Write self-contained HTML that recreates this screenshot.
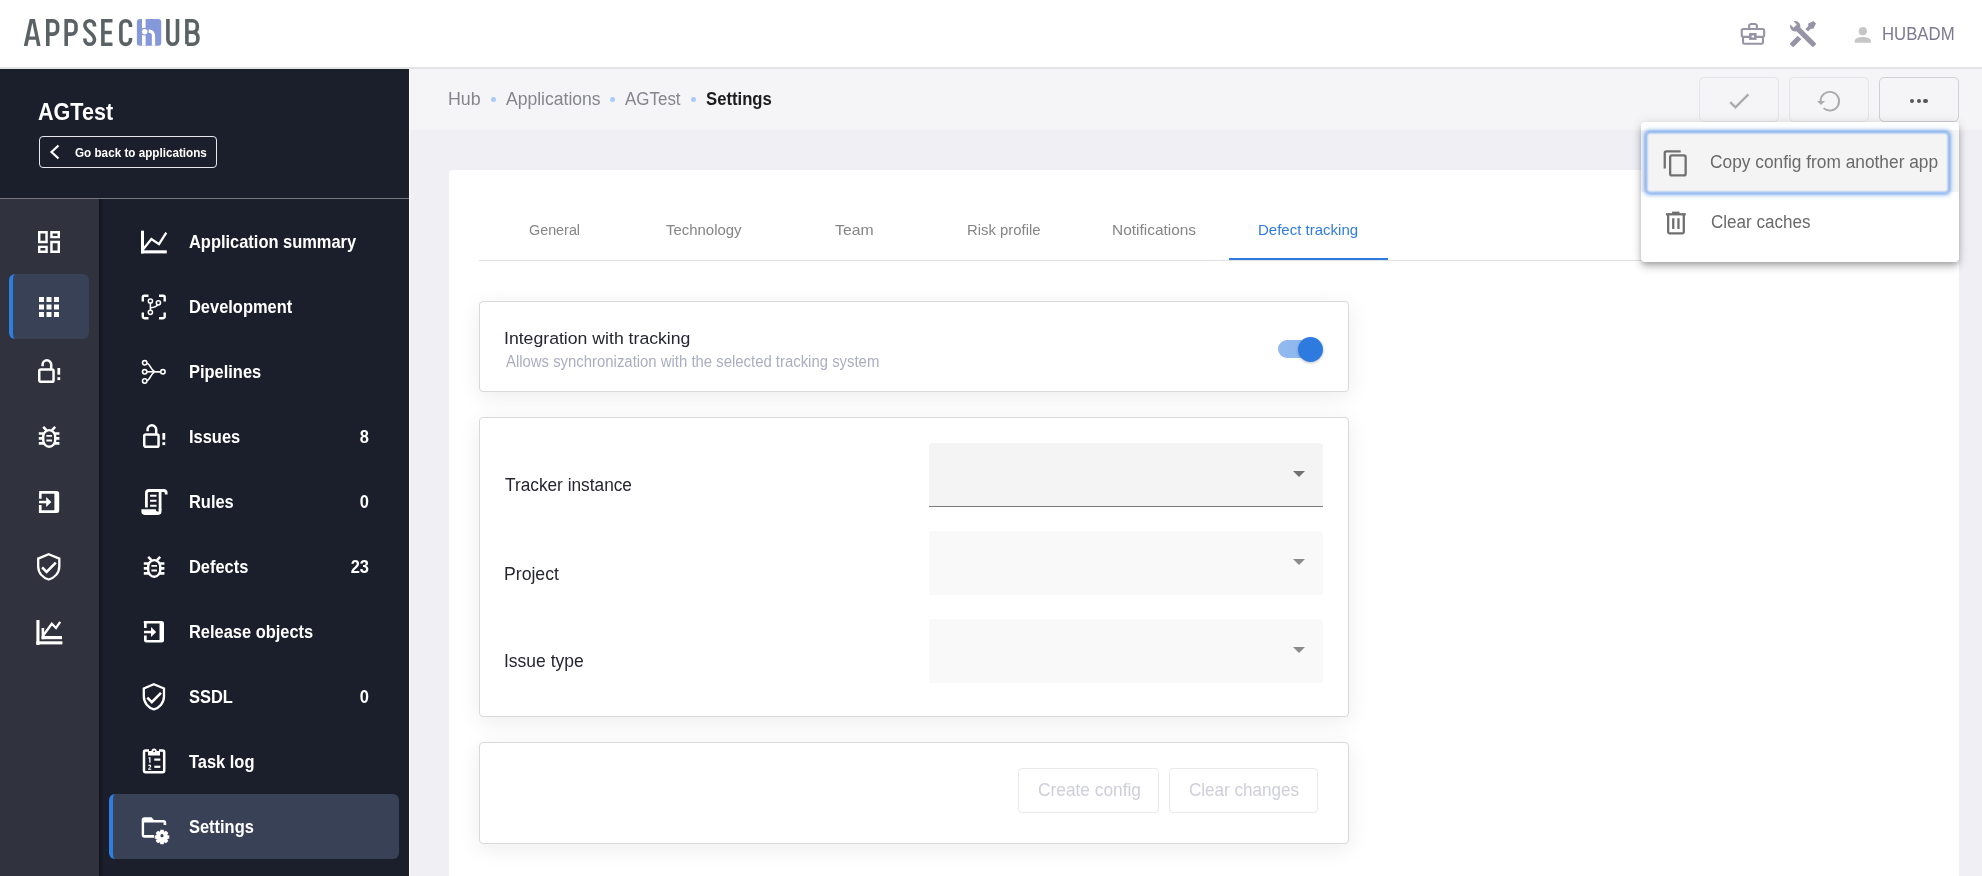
<!DOCTYPE html>
<html>
<head>
<meta charset="utf-8">
<style>
*{box-sizing:border-box;margin:0;padding:0}
html,body{width:1982px;height:876px;overflow:hidden;background:#efeff4;font-family:"Liberation Sans",sans-serif}
.a{position:absolute}
.t{position:absolute;white-space:nowrap;line-height:1;transform-origin:0 0}
svg{position:absolute;overflow:visible}
#header{left:0;top:0;width:1982px;height:67px;background:#fff}
#hborder{left:0;top:67px;width:1982px;height:2px;background:#e4e4e7}
#side{left:0;top:69px;width:409px;height:807px;background:#1b1f2b}
#sline{left:409px;top:69px;width:1px;height:807px;background:#fff}
#rail{left:0;top:199px;width:99px;height:677px;background:#30333e}
#divider{left:0;top:198px;width:409px;height:1px;background:#77787d}
#crumbbar{left:410px;top:69px;width:1572px;height:61px;background:#f5f5f8}
.nav{left:188.9px;color:#fff;font-weight:700;font-size:19.13px;transform:scaleX(0.86)}
.cnt{color:#fff;font-weight:700;font-size:19.13px;text-align:right;width:60px;left:309px;transform-origin:100% 0;transform:scaleX(0.86)}
.tab{font-size:15px;color:#858585;text-align:center}
.card{position:absolute;background:#fff;border:1px solid #d9d9dc;border-radius:4px;box-shadow:0 5px 22px rgba(0,0,0,0.075)}
.lbl{font-size:17px;color:#262633}
.sel{position:absolute;left:929px;width:394px;height:64px;background:#f9f9f9;border-radius:4px 4px 0 0}
.arr{position:absolute;width:0;height:0;border-left:6px solid transparent;border-right:6px solid transparent;border-top:6px solid #8a8a8a}
.btn{position:absolute;border:1px solid #e9e9ef;border-radius:4px;background:#fff}
.tb{position:absolute;top:77px;width:80px;height:45px;border:1px solid #e4e4e8;border-radius:5px;background:#f5f5f8}
</style>
</head>
<body>
<div id="header" class="a"></div>
<div id="hborder" class="a"></div>
<div id="side" class="a"></div>
<div id="sline" class="a"></div>
<div id="divider" class="a"></div>
<div id="rail" class="a"></div>
<div class="a" style="left:99px;top:199px;width:5px;height:677px;background:linear-gradient(to right,rgba(0,0,0,0.32),rgba(0,0,0,0))"></div>
<div id="crumbbar" class="a"></div>

<!-- HEADER CONTENT -->
<div class="t" style="left:1881.75px;top:25.02px;font-size:18.62px;color:#7c7990;transform:scaleX(0.900);">HUBADM</div>
<svg style="left:0;top:0" width="210" height="60" viewBox="0 0 210 60">
<g fill="none" stroke="#5b6266" stroke-width="3.6" stroke-linejoin="miter">
<path d="M47.8 46 V20.9 H53 a4.6 4.6 0 0 1 4.6 4.6 V29.5 a4.6 4.6 0 0 1 -4.6 4.6 H47.8"/>
<path d="M66.2 46 V20.9 H71.4 a4.6 4.6 0 0 1 4.6 4.6 V29.5 a4.6 4.6 0 0 1 -4.6 4.6 H66.2"/>
<path d="M94.5 26.5 V25.5 a4.8 4.8 0 0 0 -9.6 0 C84.9 31 94.5 33.5 94.5 39.5 a4.8 4.8 0 0 1 -9.6 0 V38.5"/>
<path d="M112.5 20.8 H102.9 V44.3 H112.5 M102.9 32.5 H111.8"/>
<path d="M130.5 27 V25.5 a4.8 4.8 0 0 0 -9.6 0 V39.6 a4.8 4.8 0 0 0 9.6 0 V38"/>
<path d="M167.9 19.1 V39.5 a4.8 4.8 0 0 0 9.6 0 V19.1"/>
<path d="M186.9 44.3 V20.8 H192.5 a4.8 4.8 0 0 1 4.8 4.8 V27.5 a4.8 4.8 0 0 1 -4.8 4.8 H186.9 M192.7 32.3 a5.2 5.2 0 0 1 5.2 5.2 V39.1 a5.2 5.2 0 0 1 -5.2 5.2 H186.9"/>
</g>
<path fill="#5b6266" fill-rule="evenodd" d="M23.8 46 L29.7 19.1 H34.9 L40.6 46 H37 L35.8 39.8 H28.9 L27.5 46 Z M29.5 36.6 H35.2 L32.35 22.8 Z"/>
<rect x="136.9" y="18.9" width="24.3" height="26.8" rx="3" fill="#8598d9"/>
<g fill="#fff"><rect x="142" y="18.9" width="3.6" height="26.8"/></g>
<circle cx="144.7" cy="31.7" r="3.85" fill="#8598d9"/>
<circle cx="144.7" cy="31.7" r="2.75" fill="#fff"/>
<path d="M148.7 31.1 H149.2 a4.3 4.3 0 0 1 4.3 4.3 V45.7" fill="none" stroke="#fff" stroke-width="3.3"/>
</svg>
<!-- briefcase -->
<svg style="left:1736px;top:18px" width="34" height="32" viewBox="1736 18 34 32"><g fill="none" stroke="#9694a6" stroke-width="2.1"><path d="M1749.15 28.2 V25.2 L1750.6 23.95 H1755.4 L1756.85 25.2 V28.2"/><rect x="1741.75" y="29.05" width="22.4" height="7.8" rx="1.6"/><path d="M1743.05 37.2 V42.4 a1.35 1.35 0 0 0 1.35 1.35 H1761.6 a1.35 1.35 0 0 0 1.35 -1.35 V37.2"/></g><rect x="1750.35" y="34.25" width="5" height="4.4" fill="#fff" stroke="#9694a6" stroke-width="2.5"/></svg>
<!-- tools -->
<svg style="left:1790px;top:20.8px" width="26" height="26" viewBox="2 2 20 20"><path fill="#9694a6" d="M21.71 20.29L20.29 21.71A1 1 0 0 1 18.88 21.71L7 9.85A3.81 3.81 0 0 1 6 10A4 4 0 0 1 2.22 4.7L4.76 7.24L5.29 6.71L6.71 5.29L7.24 4.76L4.7 2.22A4 4 0 0 1 10 6A3.81 3.81 0 0 1 9.85 7L21.71 18.88A1 1 0 0 1 21.71 20.29M2.29 18.88A1 1 0 0 0 2.29 20.29L3.71 21.71A1 1 0 0 0 5.12 21.71L10.71 16.12L7.88 13.29M20 2L16 4V6L13.83 8.17L15.83 10.17L18 8H20L22 4Z"/></svg>
<!-- user -->
<svg style="left:1854px;top:26px" width="18" height="18" viewBox="0 0 18 18"><g fill="#c6c6c6"><circle cx="8.8" cy="5.2" r="4.1"/><path d="M0.7 16.8 V15 C0.7 12.2 5.5 10.9 8.8 10.9 C12.1 10.9 16.9 12.2 16.9 15 V16.8 Z"/></g></svg>

<!-- SIDEBAR CONTENT -->
<div class="t" style="left:38.15px;top:99.77px;font-size:23.80px;font-weight:700;color:#fff;transform:scaleX(0.906);">AGTest</div>
<div class="t" style="left:74.87px;top:146.44px;font-size:13.48px;font-weight:700;color:#fff;transform:scaleX(0.868);">Go back to applications</div>
<div class="a" style="left:39px;top:136px;width:178px;height:32px;border:1px solid #e8e8ec;border-radius:4px"></div>
<svg style="left:0;top:0" width="1" height="1"><path d="M58.5 145.5 L51.5 152 L58.5 158.5" fill="none" stroke="#fff" stroke-width="2.2"/></svg>

<!-- rail active -->
<div class="a" style="left:9px;top:274px;width:80px;height:65px;background:#394157;border-radius:6px;border-left:4px solid #2f7de1"></div>

<!-- rail icons -->
<svg style="left:38px;top:231px" width="22" height="22" viewBox="3 3 18 18"><path fill="#fff" d="M19 5v2h-4V5h4M9 5v6H5V5h4m10 8v6h-4v-6h4M9 17v2H5v-2h4M21 3h-8v6h8V3zM11 3H3v10h8V3zm10 8h-8v10h8V11zm-10 4H3v6h8v-6z"/></svg>
<svg style="left:39px;top:297px" width="20" height="20" viewBox="4 4 16 16"><path fill="#fff" d="M4 8h4V4H4v4zm6 12h4v-4h-4v4zm-6 0h4v-4H4v4zm0-6h4v-4H4v4zm6 0h4v-4h-4v4zm6-10v4h4V4h-4zm-6 4h4V4h-4v4zm6 6h4v-4h-4v4zm0 6h4v-4h-4v4z"/></svg>
<!-- lock rail -->
<svg style="left:37px;top:359px" width="24" height="24" viewBox="0 0 24 24"><g fill="none" stroke="#fff" stroke-width="2.5"><rect x="2.25" y="10.5" width="14.3" height="12.25" rx="1.6"/><path d="M5.6 7.2 V5.6 a4.3 4.3 0 0 1 8.6 0 V10.5"/></g><rect fill="#fff" x="20.4" y="9" width="2.8" height="6.7"/><rect fill="#fff" x="20.4" y="18.2" width="2.8" height="2.9"/></svg>
<!-- bug rail -->
<svg style="left:37px;top:425px" width="24" height="24" viewBox="0 0 24 24"><g id="bugg" fill="none" stroke="#fff"><rect x="6.2" y="5.1" width="12" height="16.6" rx="6" ry="6.5" stroke-width="2.4"/><path d="M1.8 8.5h5M1.8 13.4h5M1.8 18.4h5M17.6 8.5h4.8M17.6 13.4h4.8M17.6 18.4h4.8" stroke-width="2.6"/><path d="M6.2 1.8 L9.4 5.2 M18.2 1.8 L15 5.2" stroke-width="2.5"/><path d="M9.4 10.9h5.6M9.4 15.5h5.6" stroke-width="1.8"/></g></svg>
<!-- login rail -->
<svg style="left:38px;top:490px" width="24" height="24" viewBox="0 0 24 24"><g fill="#fff"><path d="M1.2 1.1 h17.5 a2.5 2.5 0 0 1 2.5 2.5 v16.8 a2.5 2.5 0 0 1 -2.5 2.5 h-17.5 a2.5 2.5 0 0 1 -0.3 0 v-7.8 h2.7 v5.1 h12.8 v-16.4 h-12.8 v5 h-2.7 z"/><rect x="1" y="10.8" width="8" height="2.5"/><path d="M8.2 7 L13.4 12.05 L8.2 17.1 z"/></g></svg>
<!-- shield rail -->
<svg style="left:37px;top:553px" width="24" height="28" viewBox="0 0 24 28"><g fill="none" stroke="#fff" stroke-width="2.3"><path d="M11.7 1.3 L22.3 5.6 V13.5 C22.3 20 17.5 25 11.7 26.5 C5.9 25 1.2 20 1.2 13.5 V5.6 Z"/><path d="M5.1 14.4 L9.6 18.9 L18.8 9.7" stroke-width="2.6"/></g></svg>
<!-- chart rail -->
<svg style="left:36px;top:619px" width="27" height="26" viewBox="0 0 27 26"><g fill="#fff"><rect x="0.4" y="1" width="3.1" height="25"/><rect x="0.4" y="22.3" width="26" height="3.1"/><rect x="5.6" y="9" width="2.6" height="11.2"/><rect x="5.6" y="17" width="20.4" height="3.2"/></g><path d="M7.2 16.5 L15.8 4.8 L20 9 L24.2 2.8" fill="none" stroke="#fff" stroke-width="2.3"/></svg>

<!-- nav items -->
<div class="a" style="left:109px;top:794px;width:290px;height:65px;background:#394157;border-radius:6px;border-left:4px solid #2f7de1"></div>
<div class="t nav" style="top:231.64px">Application summary</div>
<div class="t nav" style="top:296.64px">Development</div>
<div class="t nav" style="top:361.64px">Pipelines</div>
<div class="t nav" style="top:426.64px">Issues</div>
<div class="t nav" style="top:491.64px">Rules</div>
<div class="t nav" style="top:556.64px">Defects</div>
<div class="t nav" style="top:621.64px">Release objects</div>
<div class="t nav" style="top:686.64px">SSDL</div>
<div class="t nav" style="top:751.64px">Task log</div>
<div class="t nav" style="top:816.64px">Settings</div>
<div class="t cnt" style="top:426.64px">8</div>
<div class="t cnt" style="top:491.64px">0</div>
<div class="t cnt" style="top:556.64px">23</div>
<div class="t cnt" style="top:686.64px">0</div>
<!-- nav icons -->
<svg style="left:140px;top:230px" width="28" height="24" viewBox="0 0 28 24"><g fill="#fff"><rect x="1" y="0.7" width="3" height="22.7"/><rect x="1" y="20.3" width="25.8" height="3.1"/></g><path d="M3 19.5 L11.4 9 L19 14.2 L26.3 2.6" fill="none" stroke="#fff" stroke-width="2.3"/></svg>
<!-- development -->
<svg style="left:141px;top:294px" width="26" height="26" viewBox="0 0 26 26"><g fill="none" stroke="#fff" stroke-width="2.4"><path d="M1.8 7.5 V3.3 a1.5 1.5 0 0 1 1.5 -1.5 H7.5"/><path d="M18 1.8 H22.2 a1.5 1.5 0 0 1 1.5 1.5 V7.5"/><path d="M23.7 18.5 V22.7 a1.5 1.5 0 0 1 -1.5 1.5 H18"/><path d="M7.5 24.2 H3.3 a1.5 1.5 0 0 1 -1.5 -1.5 V18.5"/></g><g fill="none" stroke="#fff" stroke-width="1.5"><circle cx="9.4" cy="7" r="2.1"/><circle cx="9.4" cy="18.3" r="2.1"/><circle cx="17.4" cy="8.8" r="2.1"/><path d="M9.4 9.1 V16.2 M9.4 14 C 12 13.5 16 12.5 16.5 10.7"/></g></svg>
<!-- pipelines -->
<svg style="left:140px;top:358px" width="28" height="28" viewBox="0 0 28 28"><g fill="none" stroke="#fff" stroke-width="1.6"><circle cx="4.7" cy="4.8" r="2.2"/><circle cx="4.7" cy="13.8" r="2.2"/><circle cx="4.7" cy="23" r="2.2"/><circle cx="22.9" cy="13.8" r="2.2"/><path d="M6.9 13.8 H20.7"/><path d="M6.9 5.3 C10 5.5 10.5 11.5 14.5 13.5 L20.7 13.8" /><path d="M6.9 22.5 C10 22.3 10.5 16 14.5 14.1"/></g></svg>
<!-- issues lock -->
<svg style="left:142px;top:424px" width="24" height="24" viewBox="0 0 24 24"><g fill="none" stroke="#fff" stroke-width="2.5"><rect x="2.25" y="10.5" width="14.3" height="12.25" rx="1.6"/><path d="M5.6 7.2 V5.6 a4.3 4.3 0 0 1 8.6 0 V10.5"/></g><rect fill="#fff" x="20.4" y="9" width="2.8" height="6.7"/><rect fill="#fff" x="20.4" y="18.2" width="2.8" height="2.9"/></svg>
<!-- rules scroll -->
<svg style="left:141px;top:489px" width="26" height="26" viewBox="0 0 26 26"><g fill="none" stroke="#fff" stroke-width="2.8"><path d="M5.4 18.5 V4.1 a2.6 2.6 0 0 1 2.6 -2.6 H22.6 a2.6 2.6 0 0 1 2.6 2.6 V5.6"/><path d="M19.1 2 V21"/></g><path fill="#fff" d="M0.4 20.2 H14.8 C14.8 21.6 15.6 22.6 17 22.6 H17.7 V20 H20.5 V22.6 a3.3 3.3 0 0 1 -3.3 3.3 H3.7 a3.3 3.3 0 0 1 -3.3 -3.3 Z"/><g stroke="#fff" stroke-width="2"><path d="M9.1 6.8 H15.5 M9.1 11.8 H15.5 M9.1 16.8 H15.5"/></g></svg>
<!-- defects bug -->
<svg style="left:142px;top:554.7px" width="24" height="24" viewBox="0 0 24 24"><g fill="none" stroke="#fff"><rect x="6.2" y="5.1" width="12" height="16.6" rx="6" ry="6.5" stroke-width="2.4"/><path d="M1.8 8.5h5M1.8 13.4h5M1.8 18.4h5M17.6 8.5h4.8M17.6 13.4h4.8M17.6 18.4h4.8" stroke-width="2.6"/><path d="M6.2 1.8 L9.4 5.2 M18.2 1.8 L15 5.2" stroke-width="2.5"/><path d="M9.4 10.9h5.6M9.4 15.5h5.6" stroke-width="1.8"/></g></svg>
<!-- release login -->
<svg style="left:143px;top:620px" width="24" height="24" viewBox="0 0 24 24"><g fill="#fff"><path d="M1 1 h17.5 a2.5 2.5 0 0 1 2.5 2.5 v16.5 a2.5 2.5 0 0 1 -2.5 2.5 h-15 a2.5 2.5 0 0 1 -2.5 -2.5 v-4.5 h2.7 v4.4 h12.8 v-16.4 h-12.8 v4.4 h-2.7 v-4.4 a2.5 2.5 0 0 1 0 -2.5 z"/><rect x="1" y="10.8" width="8" height="2.5"/><path d="M8 6.9 L13.2 12.05 L8 17.1 z"/></g></svg>
<!-- ssdl shield -->
<svg style="left:142px;top:683px" width="24" height="28" viewBox="0 0 24 28"><g fill="none" stroke="#fff" stroke-width="2.3"><path d="M11.9 1.3 L22 5.5 V13.3 C22 19.8 17.5 25 11.9 26.3 C6.3 25 1.8 19.8 1.8 13.3 V5.5 Z"/><path d="M5.3 14.6 L9.8 19.1 L19 9.9" stroke-width="2.6"/></g></svg>
<!-- task log -->
<svg style="left:142px;top:747px" width="24" height="27" viewBox="0 0 24 27"><g fill="none" stroke="#fff" stroke-width="2.5"><path d="M7 3.6 H3.6 a1.6 1.6 0 0 0 -1.6 1.6 V23.6 a1.6 1.6 0 0 0 1.6 1.6 H20.6 a1.6 1.6 0 0 0 1.6 -1.6 V5.2 a1.6 1.6 0 0 0 -1.6 -1.6 H17"/></g><path fill="#fff" d="M6 4 H9.5 a2.6 2.6 0 0 1 5.2 0 H18 V8.5 H6 Z"/><circle cx="12.1" cy="4.3" r="0.9" fill="#1b1f2b"/><g fill="#fff"><path d="M6.5 10.2 h2 v5.5 h-1.3 v-4.3 h-0.7z"/><path d="M6.2 19 a1.5 1.5 0 0 1 3 0.2 c0 1 -1.7 1.9 -1.8 2.6 h1.9 v1 h-3.2 v-0.9 c0.6 -1.2 1.9 -1.6 1.9 -2.5 a0.45 0.45 0 0 0 -0.9 -0.1 z"/><rect x="12.3" y="11.5" width="6" height="2.2"/><rect x="12.3" y="18.7" width="6" height="2.2"/></g></svg>
<!-- settings folder gear -->
<svg style="left:141px;top:816px" width="29" height="27" viewBox="0 0 29 27"><g fill="#fff"><path d="M3.4 1.2 H10.5 L13 4 H22.5 a2.7 2.7 0 0 1 2.7 2.7 V9 h-2.6 V6.6 H3.1 V18.9 H13 V21.7 H3.4 a2.7 2.7 0 0 1 -2.7 -2.7 V3.9 a2.7 2.7 0 0 1 2.7 -2.7 Z"/></g><g transform="translate(21 19.7)"><path fill="#fff" d="M-1.6 -6 h3.2 l0.5 2.1 l1.9 -1.1 l2.3 2.3 l-1.1 1.9 l2.1 0.5 v3.2 l-2.1 0.5 l1.1 1.9 l-2.3 2.3 l-1.9 -1.1 l-0.5 2.1 h-3.2 l-0.5 -2.1 l-1.9 1.1 l-2.3 -2.3 l1.1 -1.9 l-2.1 -0.5 v-3.2 l2.1 -0.5 l-1.1 -1.9 l2.3 -2.3 l1.9 1.1 z"/><circle r="1.6" fill="#394157"/></g></svg>

<!-- MAIN CONTENT -->
<div class="t" style="left:448.45px;top:90.16px;font-size:18.41px;color:#85858e;transform:scaleX(0.968);">Hub</div>
<div class="t" style="left:505.80px;top:90.16px;font-size:18.41px;color:#85858e;transform:scaleX(0.953);">Applications</div>
<div class="t" style="left:625.40px;top:90.16px;font-size:18.41px;color:#85858e;transform:scaleX(0.921);">AGTest</div>
<div class="t" style="left:706.15px;top:90.16px;font-size:18.41px;font-weight:700;color:#1c1c1e;transform:scaleX(0.907);">Settings</div>
<div class="a" style="left:490.8px;top:96.6px;width:5px;height:5px;border-radius:50%;background:#a9cdf4"></div>
<div class="a" style="left:609.9px;top:96.6px;width:5px;height:5px;border-radius:50%;background:#a9cdf4"></div>
<div class="a" style="left:690.9px;top:96.6px;width:5px;height:5px;border-radius:50%;background:#a9cdf4"></div>

<div class="tb" style="left:1699px"></div>
<div class="tb" style="left:1789px"></div>
<div class="tb" style="left:1879px;border-color:#cfcfd4"></div>
<svg style="left:1729px;top:93px" width="22" height="17" viewBox="0 0 22 17"><path d="M1.2 9.2 L6.4 14.4 L19.4 1.4" fill="none" stroke="#ababab" stroke-width="2.4"/></svg>
<svg style="left:1810px;top:85px" width="40" height="32" viewBox="1810 85 40 32"><path d="M1820.5 101.4 A9.3 9.3 0 1 1 1823.6 108.1" fill="none" stroke="#ababab" stroke-width="1.9"/><path d="M1816.9 101.1 L1825.1 101.1 L1821 105.1 Z" fill="#ababab"/></svg>
<g></g>
<div class="a" style="left:1909.7px;top:98.5px;width:4.6px;height:4.6px;border-radius:50%;background:#575757"></div>
<div class="a" style="left:1916.5px;top:98.5px;width:4.6px;height:4.6px;border-radius:50%;background:#575757"></div>
<div class="a" style="left:1923.3px;top:98.5px;width:4.6px;height:4.6px;border-radius:50%;background:#575757"></div>

<!-- main card -->
<div class="a" style="left:449px;top:170px;width:1510px;height:720px;background:#fff;border-radius:4px"></div>
<div class="a" style="left:479px;top:260px;width:1480px;height:1px;background:#e2e2e4"></div>
<div class="a" style="left:1229px;top:258px;width:159px;height:2px;background:#2f7be0"></div>

<!-- integration card -->
<div class="card" style="left:479px;top:301px;width:870px;height:91px"></div>
<div class="a" style="left:1278px;top:340px;width:40px;height:17.5px;border-radius:9px;background:#90b9ef"></div>
<div class="a" style="left:1298px;top:337px;width:25px;height:25px;border-radius:50%;background:#2e7be0;box-shadow:0 1px 3px rgba(0,0,0,0.25)"></div>

<!-- form card -->
<div class="card" style="left:479px;top:417px;width:870px;height:300px"></div>
<div class="sel" style="top:443px;background:#f4f4f4;border-bottom:1px solid #7b7b7b"></div>
<div class="sel" style="top:531px"></div>
<div class="sel" style="top:619px"></div>
<div class="arr" style="left:1292.5px;top:470.5px;border-top-color:#717171"></div>
<div class="arr" style="left:1292.5px;top:558.5px"></div>
<div class="arr" style="left:1292.5px;top:646.5px"></div>

<!-- actions card -->
<div class="card" style="left:479px;top:742px;width:870px;height:102px"></div>
<div class="btn" style="left:1018px;top:768px;width:141px;height:45px"></div>
<div class="btn" style="left:1169px;top:768px;width:149px;height:45px"></div>

<div class="t" style="left:528.72px;top:221.78px;font-size:15.55px;color:#858585;transform:scaleX(0.923);">General</div>
<div class="t" style="left:666.26px;top:221.78px;font-size:15.55px;color:#858585;transform:scaleX(0.960);">Technology</div>
<div class="t" style="left:834.85px;top:221.78px;font-size:15.55px;color:#858585;transform:scaleX(1.015);">Team</div>
<div class="t" style="left:967.12px;top:221.78px;font-size:15.55px;color:#858585;transform:scaleX(0.956);">Risk profile</div>
<div class="t" style="left:1111.78px;top:221.78px;font-size:15.55px;color:#858585;transform:scaleX(0.993);">Notifications</div>
<div class="t" style="left:1258.41px;top:221.78px;font-size:15.55px;color:#2f7be0;transform:scaleX(0.966);">Defect tracking</div>
<div class="t" style="left:503.98px;top:330.63px;font-size:16.90px;color:#262633;transform:scaleX(1.045);">Integration with tracking</div>
<div class="t" style="left:505.70px;top:354.44px;font-size:15.60px;color:#abaec0;transform:scaleX(0.955);">Allows synchronization with the selected tracking system</div>
<div class="t" style="left:504.83px;top:476.16px;font-size:18.41px;color:#262633;transform:scaleX(0.938);">Tracker instance</div>
<div class="t" style="left:504.07px;top:564.63px;font-size:18.55px;color:#262633;transform:scaleX(0.952);">Project</div>
<div class="t" style="left:503.85px;top:652.23px;font-size:18.55px;color:#262633;transform:scaleX(0.944);">Issue type</div>
<div class="t" style="left:1037.61px;top:781.38px;font-size:18.60px;color:#cfcfdb;transform:scaleX(0.931);">Create config</div>
<div class="t" style="left:1188.72px;top:781.38px;font-size:18.60px;color:#cfcfdb;transform:scaleX(0.918);">Clear changes</div>
<!-- MENU -->
<div class="a" style="left:1641px;top:122px;width:318px;height:140px;background:#fff;border-radius:4px;box-shadow:0 3px 5px -1px rgba(0,0,0,0.2),0 6px 8px 0 rgba(0,0,0,0.14),0 1px 12px 0 rgba(0,0,0,0.12)"></div>
<div class="a" style="left:1641px;top:130px;width:318px;height:62px;background:#f4f4f4"></div>
<div class="a" style="left:1645px;top:131px;width:305.4px;height:62.8px;border:2px solid #74a6ee;border-radius:5px;filter:blur(0.9px);box-shadow:0 0 3px 1.5px rgba(116,166,238,0.5)"></div>
<svg style="left:1655px;top:140px" width="40" height="45" viewBox="1655 140 40 45"><g fill="none" stroke="#707070" stroke-width="2.3"><path d="M1664.75 168.6 V153 a1.6 1.6 0 0 1 1.6 -1.6 H1680.7"/><rect x="1670.15" y="155.45" width="15.5" height="20" rx="1.8"/></g></svg>
<svg style="left:1655px;top:205px" width="40" height="35" viewBox="1655 205 40 35"><g fill="none" stroke="#707070" stroke-width="2.3"><path d="M1665.9 214.3 H1685.8"/><path d="M1668.15 214.5 V232 a1.3 1.3 0 0 0 1.3 1.3 H1682.5 a1.3 1.3 0 0 0 1.3 -1.3 V214.5"/><path d="M1673.25 218.2 V229 M1678.45 218.2 V229"/></g><rect x="1672.1" y="211.6" width="7.4" height="2.4" fill="#707070"/></svg>

<div class="t" style="left:1710.49px;top:151.74px;font-size:19.13px;color:#6a6a6a;transform:scaleX(0.906);">Copy config from another app</div>
<div class="t" style="left:1710.50px;top:211.76px;font-size:18.99px;color:#6a6a6a;transform:scaleX(0.899);">Clear caches</div>
</body>
</html>
